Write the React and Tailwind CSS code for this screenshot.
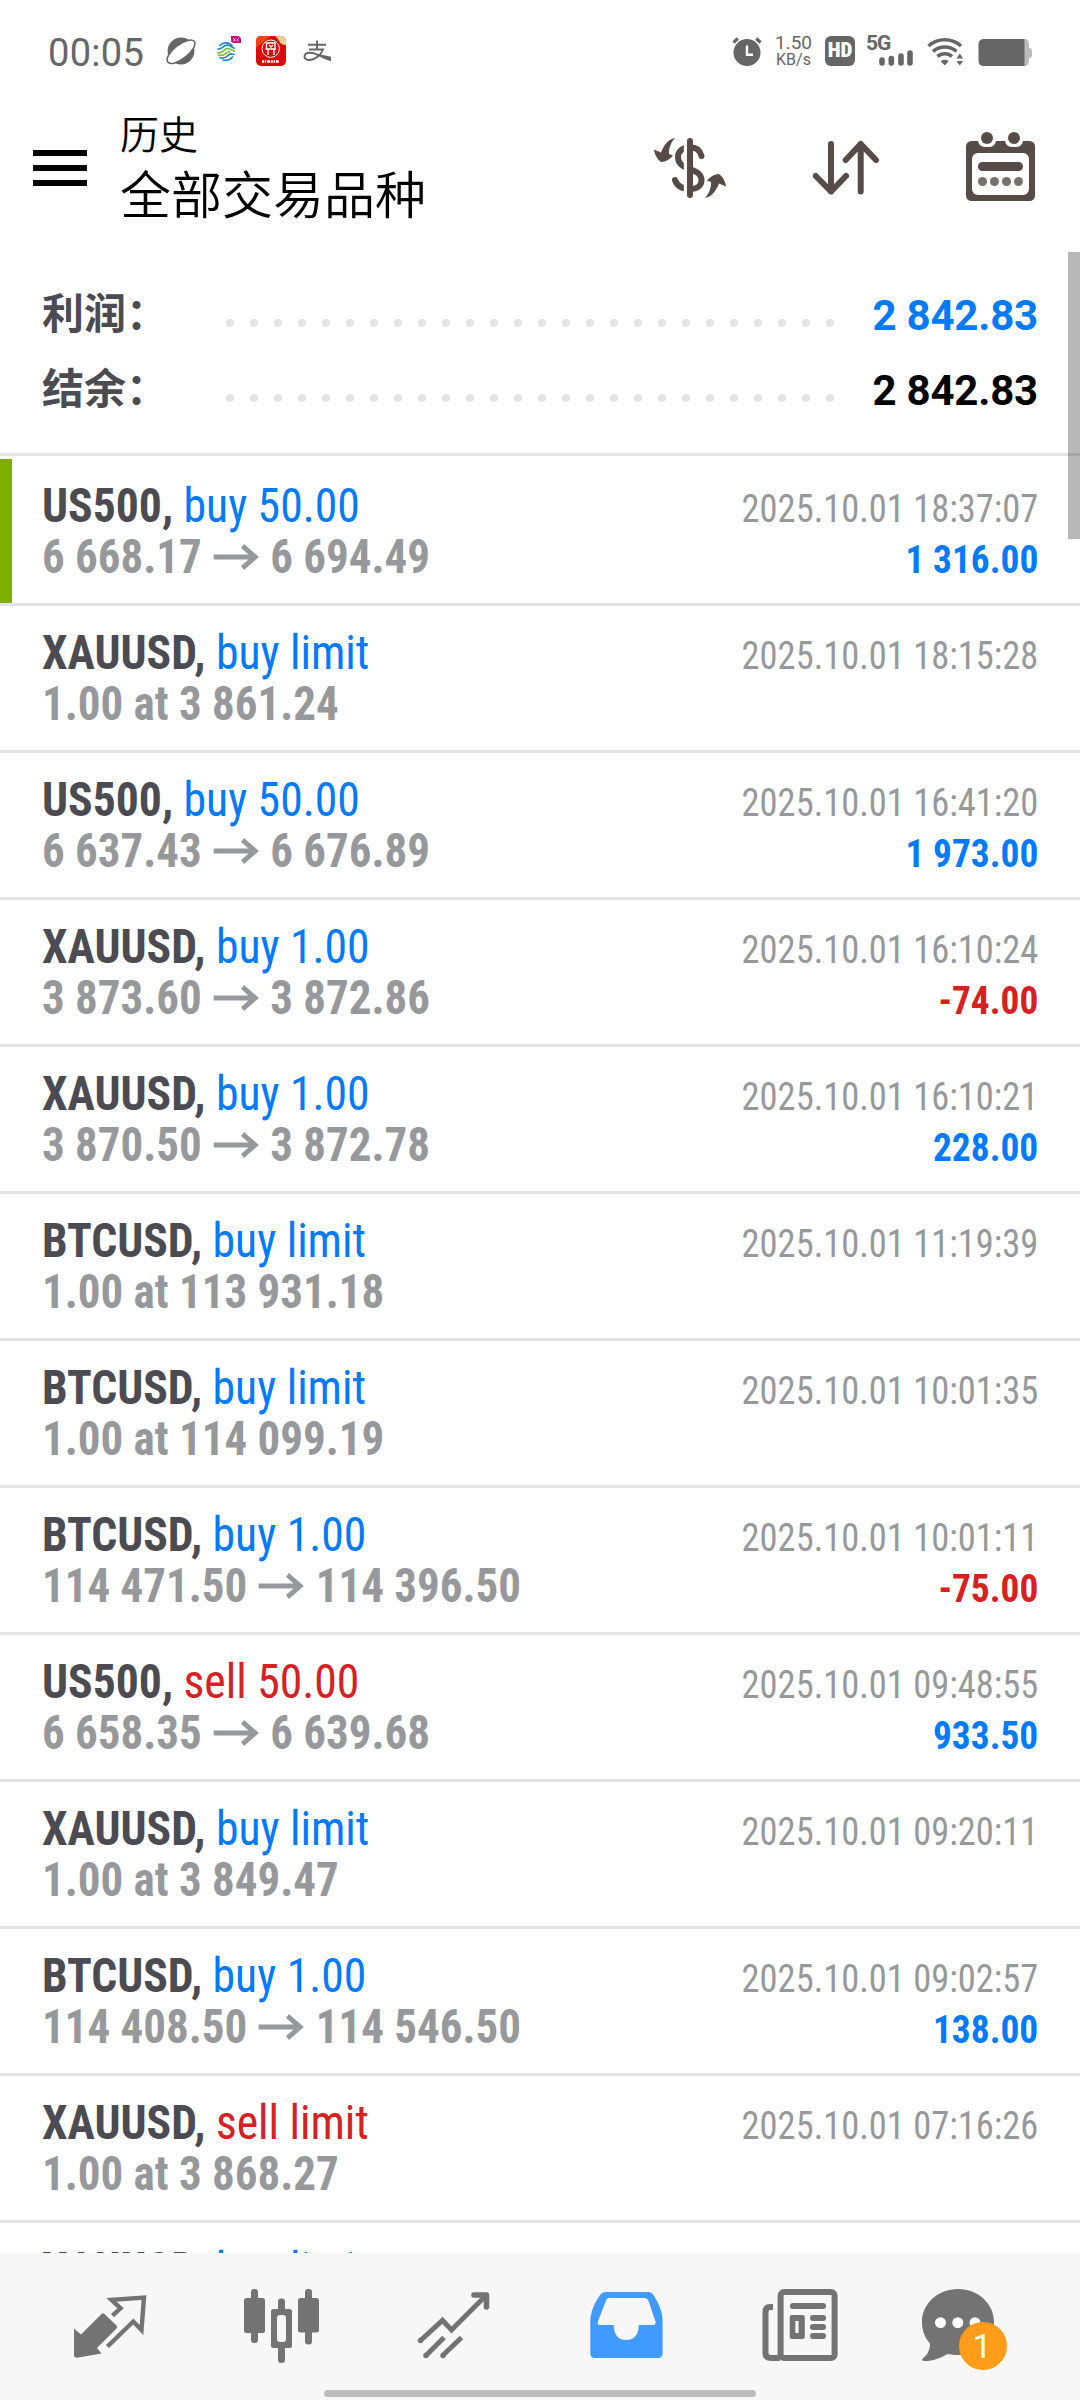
const deals = [
  { symbol: "US500", side: "buy", amount: "50.00", open: "6 668.17", close: "6 694.49", time: "2025.10.01 18:37:07", profit: "1 316.00", active: true },
  { symbol: "XAUUSD", side: "buy", amount: "limit", note: "1.00 at 3 861.24", time: "2025.10.01 18:15:28" },
  { symbol: "US500", side: "buy", amount: "50.00", open: "6 637.43", close: "6 676.89", time: "2025.10.01 16:41:20", profit: "1 973.00" },
  { symbol: "XAUUSD", side: "buy", amount: "1.00", open: "3 873.60", close: "3 872.86", time: "2025.10.01 16:10:24", profit: "-74.00" },
  { symbol: "XAUUSD", side: "buy", amount: "1.00", open: "3 870.50", close: "3 872.78", time: "2025.10.01 16:10:21", profit: "228.00" },
  { symbol: "BTCUSD", side: "buy", amount: "limit", note: "1.00 at 113 931.18", time: "2025.10.01 11:19:39" },
  { symbol: "BTCUSD", side: "buy", amount: "limit", note: "1.00 at 114 099.19", time: "2025.10.01 10:01:35" },
  { symbol: "BTCUSD", side: "buy", amount: "1.00", open: "114 471.50", close: "114 396.50", time: "2025.10.01 10:01:11", profit: "-75.00" },
  { symbol: "US500", side: "sell", amount: "50.00", open: "6 658.35", close: "6 639.68", time: "2025.10.01 09:48:55", profit: "933.50" },
  { symbol: "XAUUSD", side: "buy", amount: "limit", note: "1.00 at 3 849.47", time: "2025.10.01 09:20:11" },
  { symbol: "BTCUSD", side: "buy", amount: "1.00", open: "114 408.50", close: "114 546.50", time: "2025.10.01 09:02:57", profit: "138.00" },
  { symbol: "XAUUSD", side: "sell", amount: "limit", note: "1.00 at 3 868.27", time: "2025.10.01 07:16:26" },
  { symbol: "XAUUSD", side: "buy", amount: "limit" },
];

function StatusBar() {
  return (
    <div className="flex h-[100px] items-start pt-7 pl-12 pr-[46px] text-[#666]">
      <span className="w-[107px] whitespace-nowrap text-[38px] leading-[51px] tracking-[0.3px]">00:05</span>
      <svg width="190" height="48" viewBox="0 0 190 48" fill="none">
        {/* planet */}
        <circle cx="26" cy="23" r="13.4" fill="#666" />
        <ellipse cx="26" cy="23.7" rx="16.8" ry="7" transform="rotate(-38 26 23.7)" fill="#fff" stroke="#666" strokeWidth="1.6" />
        {/* carrier */}
        <g strokeWidth="1.7" strokeLinecap="round">
          <path d="M65 17.500C68 14 74 14 77 17.500M63 21C67 22 68.500 16.500 72.500 17.200C75 17.500 77 19 79 20" stroke="#1f86c9" />
          <path d="M62.500 24.500C68.500 26.500 69 19.800 73 20.500C75.500 21 77 22.500 79.500 23M63.500 27C70.500 29.500 70.500 22.800 74.500 23.800" stroke="#7fbf3a" />
          <path d="M65 29.800C72 32 73 25.500 76 25.800C77.500 26 78 26.500 79 26.500M68 32C72.500 33 75.500 31.500 77.500 29" stroke="#1f86c9" />
        </g>
        <path d="M76 8h6q4 0 4 4v3h-7q-3 0-3-3z" fill="#cc0f7b" />
        <path d="M78.500 10.500l2 2.500M80.500 10.500l-2 2.500M83.500 10.500l-1.500 1.500 1.500 1" stroke="#fff" strokeWidth=".8" />
        {/* bank */}
        <rect x="101" y="8" width="30" height="30" rx="5" fill="#d90a08" />
        <path d="M101 20v-7q0-5 5-5h10z" fill="#f04310" />
        <path d="M120 8h6q5 0 5 5v4q-5 0-7-4t-4-5z" fill="#f3cf98" />
        <circle cx="115.700" cy="20.700" r="8.700" stroke="#fff" strokeWidth="1" />
        <path d="M111.500 20.500v-5.500h8.500v5.500M110.500 21h10.500M113 21v6M119 21v6M114 17l2 2 2-2" stroke="#fff" strokeWidth="1.400" />
        <path d="M107 33.500h17" stroke="#fff" strokeWidth="2.600" strokeDasharray="2 .8 1.400 .8 3 .8" />
        {/* pay */}
        <path d="M153 16.800h18M162 12.500v9M154 21.500h14C166 27 160 32 155 32C151 32 149.500 30.500 149.500 28.500C149.500 26 152 24.700 155 24.700C158 24.700 160.500 25.700 163 27" stroke="#666" strokeWidth="1.900" />
        <path d="M162 25.700l14 3v4.500q-7-2-14-6z" fill="#666" />
      </svg>
      <div className="ml-auto flex items-start">
        <svg width="48" height="48" viewBox="0 0 48 48" fill="none">
          <circle cx="27" cy="24.500" r="13.500" fill="#666" />
          <path d="M13.500 14.500l4.300-4M36.300 10.500l4.300 4" stroke="#666" strokeWidth="3.200" />
          <path d="M27 17.500v9.300h6" stroke="#fff" strokeWidth="2.400" />
        </svg>
        <div className="flex w-[51px] flex-col items-center pt-[7px]">
          <span className="text-[19px] leading-[16px]">1.50</span>
          <span className="text-[16px] leading-[17px]">KB/s</span>
        </div>
        <div className="mt-2 ml-1.5 flex h-[30px] w-[30px] items-center justify-center rounded-[6px] bg-[#666] text-[21px] font-black [font-stretch:75%] text-white">
          HD
        </div>
        <div className="relative mt-2 ml-3">
          <span className="absolute -top-[4px] -left-px text-[21px] leading-[23px] font-bold tracking-[-1px]">5G</span>
          <svg width="46" height="30" viewBox="147 8 46 30" stroke="#666" strokeWidth="5.600" strokeLinecap="round">
            <path d="M162 32v3M171.300 30.500v4.500M181 28v7M190 25v10" />
          </svg>
        </div>
        <svg className="mt-2 ml-[13px]" width="38" height="30" viewBox="206 8 38 30" fill="none" stroke="#666" strokeWidth="3.500">
          <path d="M208.500 18C217.500 9.700 232 9.700 241 18M213 23.500C219.500 17.500 230 17.500 236.500 23.500M217.500 28.500C221.500 24.700 228 24.700 232 28.500" />
          <path d="M220.700 33q4-2.500 8 0l-4 4.500zM236.500 30.500h6.500l-3.200-5zM236.500 33h6.500l-3.200 4.500z" fill="#666" stroke="none" />
        </svg>
        <svg className="mt-2 ml-[14px]" width="56" height="30" viewBox="258 8 56 30">
          <path d="M300 11h4q5 0 5 5v4q3 0 3 3v4q0 3-3 3v3q0 5-5 5h-4z" fill="#bcbcbc" />
          <path d="M264 11h40.500v27H264q-5.500 0-5.500-5.500v-16Q258.500 11 264 11z" fill="#666" />
        </svg>
      </div>
    </div>
  );
}

function Header() {
  return (
    <header className="flex h-[152px] items-start pl-[33px] pr-10">
      <div className="mt-[50px] flex w-[54px] flex-col gap-[9px]">
        <div className="h-[6px] bg-black" />
        <div className="h-[6px] bg-black" />
        <div className="h-[6px] bg-black" />
      </div>
      <div className="ml-[33px] flex flex-col pt-[7px] font-['Noto_Sans_CJK_SC',sans-serif] [font-weight:350] text-black">
        <span className="text-[39px] leading-[50px]">历史</span>
        <span className="text-[51px] leading-[70px]">全部交易品种</span>
      </div>
      <div className="mt-5 ml-auto flex gap-[60px]">
        <svg width="100" height="100" viewBox="0 0 100 100" fill="none">
          <path
            d="M61.500 36C60 30 56 27.300 50 27.300C42.500 27.300 38 31.500 38 37C38 43.500 42 46.500 49 48.800C57 51.500 61.500 54 61.500 60.500C61.500 65.500 57 69 50 69C42 69 37 66 35 60"
            stroke="#564b47" strokeWidth="6" strokeLinecap="round"
          />
          <path d="M45.500 20v56" stroke="#fff" strokeWidth="3.400" />
          <path d="M50 21v54" stroke="#564b47" strokeWidth="6" strokeLinecap="round" />
          <g fill="#564b47">
            <path d="M35 18C28 19 23.500 26 21 32.500L14 29.500C14.500 34 17 39 21 42C26 42 30 39 33 35.500L29 34C28.500 29 31 22 35 18Z" />
            <path transform="rotate(180 50 48)" d="M35 18C28 19 23.500 26 21 32.500L14 29.500C14.500 34 17 39 21 42C26 42 30 39 33 35.500L29 34C28.500 29 31 22 35 18Z" />
          </g>
        </svg>
        <svg width="90" height="100" viewBox="160 0 90 100" fill="none" stroke="#564b47" strokeWidth="6" strokeLinecap="round" strokeLinejoin="round">
          <path d="M191 24v47.500M175.800 56L191 71.500L206 56M220.700 71.500V24M205.700 40L220.700 24L236 40" />
        </svg>
        <svg width="90" height="100" viewBox="310 0 90 100">
          <rect x="326" y="21" width="69" height="60" rx="5.500" fill="#564b47" />
          <rect x="332" y="33" width="57" height="42" rx="6" fill="#fff" />
          <rect x="338" y="9" width="18" height="18" rx="6.500" fill="#fff" />
          <rect x="365" y="9" width="18" height="18" rx="6.500" fill="#fff" />
          <circle cx="347" cy="18" r="6" fill="#564b47" />
          <circle cx="374" cy="18" r="6" fill="#564b47" />
          <rect x="338" y="42" width="45" height="9" rx="4.500" fill="#564b47" />
          <g fill="#78706c">
            <circle cx="342.500" cy="61.500" r="4.500" />
            <circle cx="354.500" cy="61.500" r="4.500" />
            <circle cx="366.500" cy="61.500" r="4.500" />
            <circle cx="378.500" cy="61.500" r="4.500" />
          </g>
        </svg>
      </div>
    </header>
  );
}

function SummaryRow({ label, value, color }) {
  return (
    <div className="flex h-[75px] items-center pl-[42px] pr-[42px]">
      <span className="mt-[2px] w-[184px] font-['Roboto','Noto_Sans_CJK_SC',sans-serif] text-[42px] leading-[60px] font-semibold whitespace-nowrap text-[#4c4b52]">
        {label}
      </span>
      <div className="mt-[19px] flex w-[608px] justify-between">
        {Array.from({ length: 26 }).map((_, i) => (
          <span key={i} className="h-2 w-2 rounded-full bg-[#e4e4e4]" />
        ))}
      </div>
      <span className={`mt-[3px] ml-auto text-[42px] font-bold tracking-[-0.2px] whitespace-nowrap ${color}`}>{value}</span>
    </div>
  );
}

function DealRow({ deal }) {
  const sideColor = deal.side === "buy" ? "text-[#007aff]" : "text-[#d82022]";
  return (
    <div className="border-b-[3px] border-[#e4e4e4]">
      <div className={`flex h-[144px] justify-between border-l-[12px] pl-[30px] pr-[42px] pt-[21px] whitespace-nowrap [font-stretch:75%] ${deal.active ? "border-[#7eb000]" : "border-transparent"}`}>
        <div className="text-[48px] leading-[51px]">
          <div className="origin-left scale-x-[0.951]">
            <span className="font-bold text-[#4c4b52]">{deal.symbol},</span>{" "}
            <span className={sideColor}>{deal.side} {deal.amount}</span>
          </div>
          <div className="flex origin-left scale-x-[0.937] items-center font-bold text-[#97989b]">
            {deal.note || (
              deal.open && (
                <>
                  <span>{deal.open}</span>
                  <svg className="mx-[12px]" width="49" height="30" viewBox="0 0 49 30" fill="none" stroke="#97989b" strokeWidth="5">
                    <path d="M0 15h44M31 4l13.500 11L31 26" />
                  </svg>
                  <span>{deal.close}</span>
                </>
              )
            )}
          </div>
        </div>
        <div className="pt-[4px] text-right text-[39px] leading-[51px]">
          <div className="origin-right scale-x-[0.935] text-[#97989b]">{deal.time}</div>
          {deal.profit && (
            <div className={`origin-right scale-x-[0.958] font-bold ${deal.profit.startsWith("-") ? "text-[#d82022]" : "text-[#007aff]"}`}>{deal.profit}</div>
          )}
        </div>
      </div>
    </div>
  );
}

function BottomNav() {
  return (
    <nav className="flex h-[147px] flex-col items-center bg-[#f7f7f7]">
      <div className="grid w-full grid-cols-6 px-6">
        <svg width="172" height="137" viewBox="24 53 172 137" fill="none">
          <path d="M74 128.500L81 134.500L101.500 114Q103 112.500 104.500 114L116.500 125.500Q118 127 116.500 128.500L97 148L101.500 153.500L77 157.700Q74 157.700 74 155Z" fill="#737373" />
          <path d="M107.500 146.500L133.300 121.500L141.500 130L144 97.500L111.500 99.800L120.500 108.300L112.500 115.700" stroke="#737373" strokeWidth="4.400" />
        </svg>
        <svg width="172" height="137" viewBox="196 53 172 137" fill="#737373">
          <rect x="251" y="89" width="7" height="54" rx="3" />
          <rect x="244" y="98" width="21" height="35" rx="2.500" />
          <rect x="278" y="98.500" width="7" height="64.500" rx="3" />
          <rect x="271" y="109" width="21" height="39" rx="2.500" />
          <rect x="277" y="115" width="9" height="27" rx="3" fill="#f7f7f7" />
          <rect x="305" y="89" width="7" height="55.500" rx="3" />
          <rect x="298" y="98" width="21" height="34.500" rx="2.500" />
        </svg>
        <svg width="172" height="137" viewBox="368 53 172 137" fill="none" stroke="#737373" strokeWidth="5">
          <path d="M420.500 140.500L442.500 120.300L451.500 130L486 95.500M426 155.500L444 137.500M442.700 155.500L461.500 137.500" />
          <path d="M420.500 140.500h.01M426 155.500h.01M443 155.500h.01" strokeLinecap="round" strokeWidth="5.500" />
          <path d="M474 95h12.500v12" strokeLinecap="round" strokeLinejoin="round" strokeWidth="5.600" />
        </svg>
        <svg width="172" height="137" viewBox="540 53 172 137">
          <path fillRule="evenodd" fill="#419bff" d="M605.500 92H648.500C650.500 92 652 93 653 94.500C659 103 662.600 112 662.600 121.700V153Q662.600 158 658 158H595Q590.300 158 590.300 153V121.700C590.300 112 595 102 600.500 94.500C602 92.800 603.500 92 605.500 92ZM610.500 98C608 98 607 98.500 606 100.500L597.900 121.500C597.300 124 598 125 600 125H613.700C613.700 134 618 140 626 140C634.500 140 638.800 134 638.800 125H653C655.300 125 656 123.500 655.500 121.500L648.500 101C647.500 98.700 646.500 98 644 98Z" />
        </svg>
        <svg width="172" height="137" viewBox="712 53 172 137" fill="none" stroke="#737373" strokeWidth="6">
          <rect x="780.600" y="92" width="54" height="66" rx="3.500" />
          <path d="M773 107H770Q765.500 107 765.500 112V153Q765.500 158 771 158H780" />
          <g fill="#737373" stroke="none">
            <rect x="790" y="103" width="36" height="6" rx="3" />
            <path fillRule="evenodd" d="M792 115h10.500q2.300 0 2.300 2.300v19.400q0 2.300-2.300 2.300H792q-2.300 0-2.300-2.300v-19.400q0-2.300 2.300-2.300zM795.300 121v12h3.300v-12z" />
            <rect x="810" y="115" width="16" height="6" rx="3" />
            <rect x="810" y="124" width="16" height="6" rx="3" />
            <rect x="810" y="133" width="16" height="6" rx="3" />
          </g>
        </svg>
        <div className="relative">
          <svg width="172" height="137" viewBox="884 53 172 137" fill="#737373">
            <path d="M958 89C978 89 994 103.500 994 122C994 140.500 978 155 958 155C954 155 951 154.500 947.500 154C940 158.500 932 161.300 924 161C922 161 921.500 159.500 923 158.300C928 154.500 930 149 930 143.500C925 138 922 130.500 922 122C922 103.500 938 89 958 89Z" />
            <g fill="#fff">
              <circle cx="940.500" cy="122.700" r="5.500" />
              <circle cx="957.800" cy="122.700" r="5.500" />
              <circle cx="975" cy="122.700" r="5.500" />
            </g>
          </svg>
          <span className="absolute top-[69px] left-[75px] flex h-12 w-12 items-center justify-center rounded-full bg-[#ff9d1b] pr-0.5 text-[34px] text-white">
            1
          </span>
        </div>
      </div>
      <div className="h-[7px] w-[432px] rounded-full bg-[#bcbcbc]" />
    </nav>
  );
}

export default function App() {
  return (
    <div className="flex h-[2400px] w-[1080px] flex-col overflow-hidden bg-white font-['Roboto',sans-serif]">
      <StatusBar />
      <Header />
      <main className="relative h-[2001px] overflow-hidden">
        <section className="h-[207px] pt-6">
          <SummaryRow label="利润：" value="2 842.83" color="text-[#007aff]" />
          <SummaryRow label="结余：" value="2 842.83" color="text-black" />
          <div className="mt-[27px] h-[3px] bg-[#e4e4e4]" />
        </section>
        {deals.map((deal, i) => (
          <DealRow key={i} deal={deal} />
        ))}
        <div className="absolute top-0 right-0 h-[287px] w-3 bg-black/28" />
      </main>
      <BottomNav />
    </div>
  );
}
